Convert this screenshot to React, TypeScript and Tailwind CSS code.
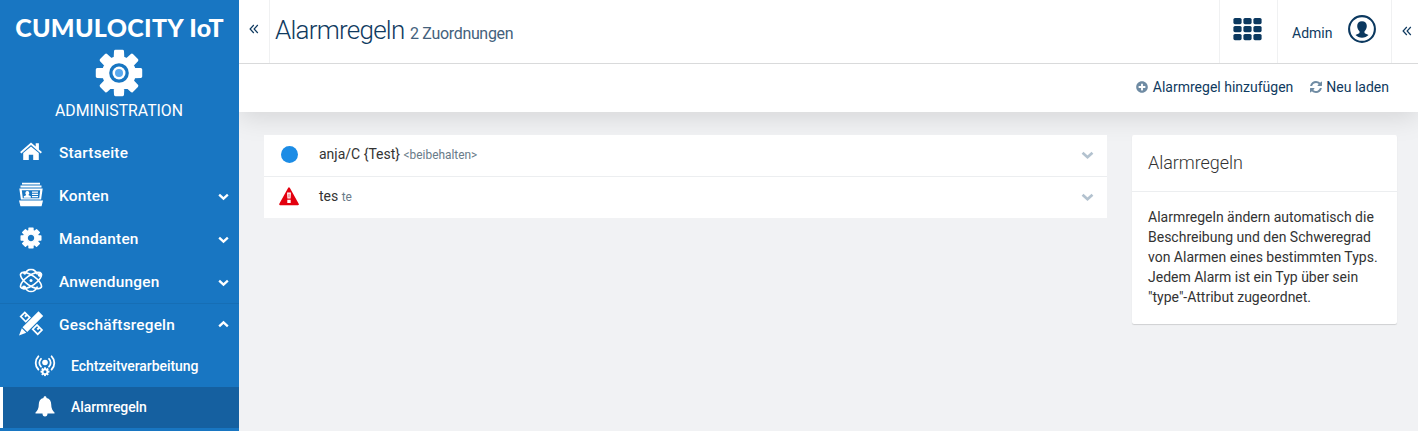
import type { ReactNode } from 'react';
import { FaPlusCircle } from 'react-icons/fa';

type IconProps = { className?: string };

function gearPath(c: number, outer: number, inner: number, hole: number, half: number, baseHalf: number) {
  const points: string[] = [];
  for (let i = 0; i < 8; i++) {
    const mid = (i * Math.PI) / 4;
    const at = (r: number, a: number) =>
      `${(c + r * Math.sin(mid + a)).toFixed(2)} ${(c - r * Math.cos(mid + a)).toFixed(2)}`;
    points.push(at(inner, -baseHalf), at(outer, -half), at(outer, half), at(inner, baseHalf));
  }
  return `M${points.join('L')}ZM${c - hole} ${c}a${hole} ${hole} 0 1 0 ${2 * hole} 0a${hole} ${hole} 0 1 0 ${-2 * hole} 0Z`;
}

function AppGear() {
  return (
    <svg viewBox="0 0 48 48" className="block size-12">
      <path d={gearPath(24, 22, 15.5, 10, 0.16, 0.25)} fill="#fff" stroke="#fff" strokeWidth="3" strokeLinejoin="round" fillRule="evenodd" />
      <circle cx="24" cy="24" r="9.8" fill="#1876c2" />
      <circle cx="24" cy="24" r="6.5" fill="#fff" />
      <circle cx="24" cy="24" r="4" fill="#5aa9ee" />
    </svg>
  );
}

function HomeIcon() {
  return (
    <svg viewBox="0 0 24 24" className="block size-6 -translate-y-px" fill="currentColor">
      <path d="M12 6.600 4.200 13v6.900h5.600v-5.200h4.400v5.200h5.600V13z" />
      <path d="M1.100 12.100 12 2.600l4.700 4V3.300h3.200v6.100l3 2.700-1.100 1.300L12 5.100l-9.700 8.300z" />
    </svg>
  );
}

function AccountsIcon() {
  return (
    <svg viewBox="0 0 24 24" className="block size-6 -translate-y-[1.500px]" fill="currentColor">
      <path d="M3 0h18v2H3zM1.500 3h21v2h-21z" />
      <path fillRule="evenodd" d="M.3 6h23.400l-1.600 11H1.900zM2.800 7.700l1 8h16.400l1-8z" />
      <path d="M0 18h24l-1.500 6h-21zM8.300 8.600a2 2 0 0 1 1.300 3.500v.7l2.200 1v1.400h-7v-1.400l2.200-1v-.7a2 2 0 0 1 1.300-3.500zM13 9h6v1.200h-6zm0 2.300h6v1.100h-6zm0 2.300h6v1.100h-6z" />
    </svg>
  );
}

function CogIcon() {
  return (
    <svg viewBox="0 0 24 24" className="block size-6 -translate-y-px" fill="currentColor">
      <path d={gearPath(12, 10, 7.5, 3.9, 0.2, 0.26)} stroke="currentColor" strokeWidth="1.400" strokeLinejoin="round" fillRule="evenodd" />
    </svg>
  );
}

function AtomIcon() {
  return (
    <svg viewBox="0 0 24 24" className="block size-6 -translate-y-[1.500px]" fill="none" stroke="currentColor" strokeWidth="1.700">
      <ellipse cx="12" cy="12" rx="5" ry="12.300" transform="rotate(55 12 12)" />
      <ellipse cx="12" cy="12" rx="5" ry="12.300" transform="rotate(-55 12 12)" />
      <path d="M5.500 6C7 2.700 9.400.8 12 .8s5 1.900 6.500 5.200M5.500 18c1.500 3.300 3.900 5.200 6.500 5.200s5-1.900 6.500-5.200" />
      <g fill="currentColor" stroke="none">
        <circle cx="12" cy="12" r="1.500" />
        <circle cx="5.500" cy="4.300" r="1.500" />
        <circle cx="20.800" cy="6.300" r="2.100" />
        <circle cx="5" cy="19" r="2" />
      </g>
    </svg>
  );
}

function RulesIcon() {
  return (
    <svg viewBox="0 0 24 24" className="block size-6 -translate-y-[1.500px] overflow-visible" fill="currentColor">
      <path fillRule="evenodd" d="M5.800-.2.500 5.100l6.200 6.200L12 6zM5.800 2.200l.9.900-1.500 1.500 1.400 1.400 1.500-1.500L9.600 6 6.700 8.900 2.900 5.100z" />
      <path fillRule="evenodd" d="m18 12.300-5.500 5.500 6.200 6.200 5.500-5.500zm0 2.400 1.100 1.100-1.500 1.500 1.400 1.400 1.500-1.500 1.300 1.300-3.100 3.100-3.800-3.800z" />
      <path d="m19.500-.2 4.700 4.700L8.200 20.500l-4.700-4.700zM2.800 16.700l4.500 4.500L0 24z" />
    </svg>
  );
}

function RealtimeIcon() {
  return (
    <svg viewBox="0 0 22 22" className="block size-[22px] -translate-y-[1.500px]" fill="none" stroke="currentColor" strokeWidth="1.800" strokeLinecap="round">
      <path d="M7 4.300a5.500 5.500 0 0 0 0 7.900M4.400 1.800a9.400 9.400 0 0 0 0 13.200M15 4.300a5.500 5.500 0 0 1 0 7.900M17.600 1.800a9.400 9.400 0 0 1 0 13.200" />
      <circle cx="11" cy="8" r="2.800" fill="currentColor" stroke="none" />
      <path d={gearPath(11, 4.600, 3.500, 1.500, 0.2, 0.27)} transform="translate(0 6.200)" fill="currentColor" stroke="none" fillRule="evenodd" />
    </svg>
  );
}

function BellIcon() {
  return (
    <svg viewBox="0 0 22 22" className="block size-[22px] -translate-y-[1.500px]" fill="currentColor">
      <path d="M11 .8c1 0 1.500.7 1.500 1.600 3.300.7 4.700 3.200 4.700 6.400 0 4.200 1.300 6.400 3.300 8.200v1h-19v-1c2-1.800 3.300-4 3.300-8.200 0-3.200 1.400-5.700 4.700-6.400 0-.9.500-1.600 1.500-1.600zM8.500 18h5a2.500 3 0 0 1-5 0z" />
    </svg>
  );
}

function Chevron({ className = '' }: IconProps) {
  return (
    <svg viewBox="0 0 14 10" className={`block ${className}`} fill="none" stroke="currentColor" strokeWidth="3">
      <path d="m1.500 2 5.500 5L12.500 2" />
    </svg>
  );
}

function Collapse() {
  return (
    <svg viewBox="0 0 10 10" className="block size-2.5" fill="none" stroke="#0f3a60" strokeWidth="1.200">
      <path d="M4.800 1 1.100 5l3.700 4M8.800 1 5.100 5l3.700 4" />
    </svg>
  );
}

function Apps() {
  return (
    <svg viewBox="0 0 29 23" className="block h-[23px] w-[29px]" fill="#0b385f">
      {[0, 8, 16].map((y) => [0, 10, 20].map((x) => (
        <rect key={`${x}-${y}`} x={x + 0.4} y={y} width="8.200" height="6.200" rx="1.600" />
      )))}
    </svg>
  );
}

function User() {
  return (
    <svg viewBox="0 0 28 28" className="block size-7">
      <circle cx="14" cy="14" r="12.900" fill="none" stroke="#0b385f" strokeWidth="2.100" />
      <path d="M14 6.300c3 0 4.800 1.900 4.800 4.800 0 2.200-1 4.100-2.300 5.200v1.700c.6 1 2.800 1.200 4 2.100-1.500 1.700-4 2.600-6.500 2.600s-5-.9-6.500-2.600c1.200-.9 3.400-1.100 4-2.100v-1.700c-1.300-1.100-2.300-3-2.300-5.200 0-2.900 1.800-4.800 4.800-4.800z" fill="#0b385f" />
    </svg>
  );
}

function Refresh() {
  return (
    <svg viewBox="0 0 1536 1536" className="block size-3" fill="#6f8ba3">
      <path d="M1511 928q0 5-1 7-64 268-268 434.500t-478 166.500q-146 0-282.500-55t-243.500-157l-129 129q-19 19-45 19t-45-19-19-45v-448q0-26 19-45t45-19h448q26 0 45 19t19 45-19 45l-137 137q71 66 161 102t187 36q134 0 250-65t186-179q11-17 53-117 8-23 30-23h192q13 0 22.500 9.500t9.500 22.500zm25-800v448q0 26-19 45t-45 19h-448q-26 0-45-19t-19-45 19-45l138-138q-148-137-349-137-134 0-250 65t-186 179q-11 17-53 117-8 23-30 23h-199q-13 0-22.500-9.500t-9.500-22.500v-7q65-268 270-434.500t480-166.500q146 0 284 55.500t245 156.500l130-129q19-19 45-19t45 19 19 45z" />
    </svg>
  );
}

function Warning() {
  return (
    <svg viewBox="0 0 20 19" className="block h-[19px] w-5">
      <path d="M10 1.200 18.900 17.300H1.100z" fill="#e3000f" stroke="#e3000f" strokeWidth="1.800" strokeLinejoin="round" />
      <path d="M8.100 5.600h3.800l-.3 6H8.400zM8.300 12.800h3.400v3.200H8.300z" fill="#fff" />
      <path d="M9.400 6.800h1.200v3.600H9.400z" fill="#e3000f" opacity=".6" />
    </svg>
  );
}

function NavItem({ icon, label, open, line }: { icon: ReactNode; label: string; open?: boolean; line?: boolean }) {
  return (
    <div className={`flex h-[43px] items-center border-t pl-[19px] pr-2.5 ${line ? 'border-[#166eb5]' : 'border-transparent'}`}>
      {icon}
      <span className="ml-4 flex-1 text-[15.400px] leading-5 font-medium tracking-[0.2px]">{label}</span>
      {open !== undefined && <Chevron className={`h-2 w-[11px] ${open ? '-mt-0.5 rotate-180' : 'mt-0.5'}`} />}
    </div>
  );
}

function SubItem({ icon, label, active }: { icon: ReactNode; label: string; active?: boolean }) {
  return (
    <div className={`flex h-[41px] items-center border-l-[3px] pl-[31px] ${active ? 'border-white bg-[#1560a0]' : 'border-transparent'}`}>
      {icon}
      <span className="mb-0.5 ml-[15px] text-[14px] leading-5 font-medium tracking-[-0.08px]">{label}</span>
    </div>
  );
}

function RuleRow({ icon, name, detail }: { icon: ReactNode; name: string; detail: string }) {
  return (
    <div className="flex h-[41px] items-center pr-[13px] pl-[15px]">
      <span className="mb-0.5 flex w-5 justify-center">{icon}</span>
      <span className="mb-0.5 ml-5 flex-1 text-[14px] leading-5 text-[#333]">
        {name} <span className="text-[11.900px] text-[#697b89]">{detail}</span>
      </span>
      <Chevron className="mb-px h-[9px] w-[13px] text-[#b3c2cf]" />
    </div>
  );
}

export default function App() {
  return (
    <div className="flex h-[431px] w-[1418px] overflow-hidden bg-[#f1f2f4] font-['Roboto',sans-serif]">
      <aside className="flex w-[239px] shrink-0 flex-col bg-[#1876c2] text-white">
        <div className="flex h-[131px] flex-col items-center">
          <div className="mt-3 h-[30px] font-['Lato',sans-serif] text-[25px] leading-[30px] font-black tracking-[0.3px] whitespace-nowrap">CUMULOCITY IoT</div>
          <div className="mt-[7px] pr-px"><AppGear /></div>
          <div className="mt-1 pr-px text-[15.800px] leading-5 font-normal">ADMINISTRATION</div>
        </div>
        <NavItem icon={<HomeIcon />} label="Startseite" />
        <NavItem icon={<AccountsIcon />} label="Konten" open={false} />
        <NavItem icon={<CogIcon />} label="Mandanten" open={false} />
        <NavItem icon={<AtomIcon />} label="Anwendungen" open={false} />
        <NavItem icon={<RulesIcon />} label="Geschäftsregeln" open line />
        <SubItem icon={<RealtimeIcon />} label="Echtzeitverarbeitung" />
        <SubItem icon={<BellIcon />} label="Alarmregeln" active />
      </aside>
      <div className="flex min-w-0 flex-1 flex-col">
        <div className="bg-white shadow-[0_4px_26px_rgba(0,0,0,0.13)] [clip-path:inset(0_0_-40px_0)]">
          <header className="flex h-16 border-b border-[#d9dadb] text-[#0f3a60]">
            <div className="flex w-[31px] justify-center border-r border-[#f0f1f2] pt-6"><Collapse /></div>
            <h1 className="flex-1 pt-[13px] pl-[5px] text-[26px] leading-[34px] font-light tracking-[-0.76px] whitespace-nowrap">
              Alarmregeln <span className="text-[16px] font-normal tracking-[-0.33px] text-[#44617c]">2 Zuordnungen</span>
            </h1>
            <div className="flex w-[59px] justify-center border-x border-[#f0f1f2] pt-[18px] pr-0.5"><Apps /></div>
            <div className="flex w-[114px] items-start border-r border-[#f0f1f2] pl-3.5">
              <span className="mt-[23px] w-14 text-[14px] leading-5">Admin</span>
              <span className="mt-[15px]"><User /></span>
            </div>
            <div className="flex w-[26px] pt-[26px] pl-2.5"><Collapse /></div>
          </header>
          <div className="flex h-12 items-center justify-end pr-[29px] pb-0.5 text-[14px] text-[#0f3a60]">
            <FaPlusCircle className="mr-[5px] size-3 text-[#6f8ba3]" />
            <span className="mr-[17px]">Alarmregel hinzufügen</span>
            <Refresh />
            <span className="ml-1">Neu laden</span>
          </div>
        </div>
        <main className="flex items-start gap-[25px] pt-[23px] pr-[21px] pl-[25px]">
          <div className="relative flex-1 bg-white">
            <RuleRow icon={<span className="size-[17px] rounded-full bg-[#1c8ce5]" />} name="anja/C {Test}" detail="<beibehalten>" />
            <div className="h-px bg-[#eceef0]" />
            <RuleRow icon={<Warning />} name="tes" detail="te" />
          </div>
          <section className="relative h-[189px] w-[265px] rounded-[2px] bg-white shadow-[0_1px_1px_rgba(0,0,0,0.14)]">
            <h2 className="h-[57px] border-b border-[#eceef0] pt-[17px] pl-4 text-[18px] leading-[22px] font-light tracking-[-0.05px] text-[#333]">Alarmregeln</h2>
            <p className="px-4 pt-[15px] text-[14px] leading-5 text-[#333]">
              Alarmregeln ändern automatisch die<br />Beschreibung und den Schweregrad<br />von Alarmen eines bestimmten Typs.<br />Jedem Alarm ist ein Typ über sein<br />"type"-Attribut zugeordnet.
            </p>
          </section>
        </main>
      </div>
    </div>
  );
}
